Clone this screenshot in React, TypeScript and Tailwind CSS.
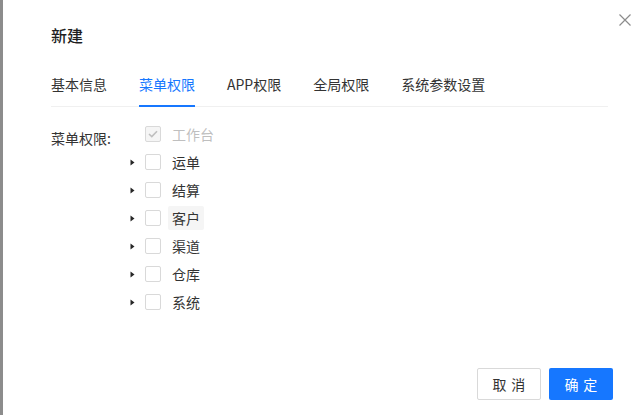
import React from "react"

const tabs = ["基本信息", "菜单权限", "APP权限", "全局权限", "系统参数设置"]
const menus = ["运单", "结算", "客户", "渠道", "仓库", "系统"]

const Caret = () => (
    <svg width="5" height="7" viewBox="0 0 5 7" className="block">
        <path d="M0.5 0.5 L4.5 3.5 L0.5 6.5 Z" fill="#262626" />
    </svg>
)

const TreeRow = ({ title, disabled, hover }: { title: string; disabled?: boolean; hover?: boolean }) => (
    <div className="flex items-center h-[28px]">
        <div className="w-6 flex items-center justify-center">{!disabled && <Caret />}</div>
        {disabled ? (
            <div className="ml-px w-4 h-4 rounded-[2px] border border-[#d9d9d9] bg-[#f5f5f5] flex items-center justify-center">
                <svg width="10" height="8" viewBox="0 0 10 8">
                    <path d="M1 4 L3.8 6.6 L9 1.2" stroke="#bfbfbf" strokeWidth="1.6" fill="none" />
                </svg>
            </div>
        ) : (
            <div className="ml-px w-4 h-4 rounded-[2px] border border-[#d9d9d9] bg-white" />
        )}
        <span
            className={`ml-[7px] px-1 h-6 leading-6 rounded-[2px] text-sm ${disabled ? "text-[#bfbfbf]" : "text-[#333]"} ${hover ? "bg-[#f5f5f5]" : ""}`}
        >
            {title}
        </span>
    </div>
)

export default function App() {
    return (
        <div
            className="w-[644px] h-[415px] flex bg-white overflow-hidden"
            style={{ fontFamily: '"Noto Sans CJK SC", "Noto Sans", sans-serif' }}
        >
            <div className="w-[3px] bg-[#8c8c8c]" />

            <div className="flex-1 relative flex flex-col">
                <button className="absolute top-[14px] right-[13px] w-3 h-3">
                    <svg width="12" height="12" viewBox="0 0 12 12">
                        <path d="M0.5 0.5 L11.5 11.5 M11.5 0.5 L0.5 11.5" stroke="#8c8c8c" strokeWidth="1.2" />
                    </svg>
                </button>

                <div className="pl-12 pt-[23px]">
                    <h2 className="text-base leading-6 font-medium text-[#1f1f1f]">新建</h2>
                </div>

                <div className="ml-12 mr-[36px] mt-[26px] flex gap-8 border-b border-[#f0f0f0]">
                    {tabs.map(t => (
                        <div
                            key={t}
                            className={`text-sm leading-[22px] pb-[10px] -mb-px border-b-2 ${t === "菜单权限" ? "text-[#1677ff] border-[#1677ff]" : "text-[#333] border-transparent"}`}
                        >
                            {t}
                        </div>
                    ))}
                </div>

                <div className="flex-1 pl-12 pt-[13px] flex">
                    <div className="w-[69px] shrink-0 whitespace-nowrap mt-[7px] text-sm leading-[22px] text-[#333]">
                        菜单权限:
                    </div>
                    <div className="flex flex-col">
                        <TreeRow title="工作台" disabled />
                        {menus.map(m => (
                            <TreeRow key={m} title={m} hover={m === "客户"} />
                        ))}
                    </div>
                </div>

                <div className="flex justify-end gap-2 pr-[31px] pb-[15px]">
                    <button className="w-16 h-8 rounded-[2px] border border-[#d9d9d9] bg-white text-sm text-[#333]">
                        <span className="tracking-[0.34em] -mr-[0.34em]">取消</span>
                    </button>
                    <button className="w-16 h-8 rounded-[2px] bg-[#1677ff] text-sm text-white">
                        <span className="tracking-[0.34em] -mr-[0.34em]">确定</span>
                    </button>
                </div>
            </div>
        </div>
    )
}
